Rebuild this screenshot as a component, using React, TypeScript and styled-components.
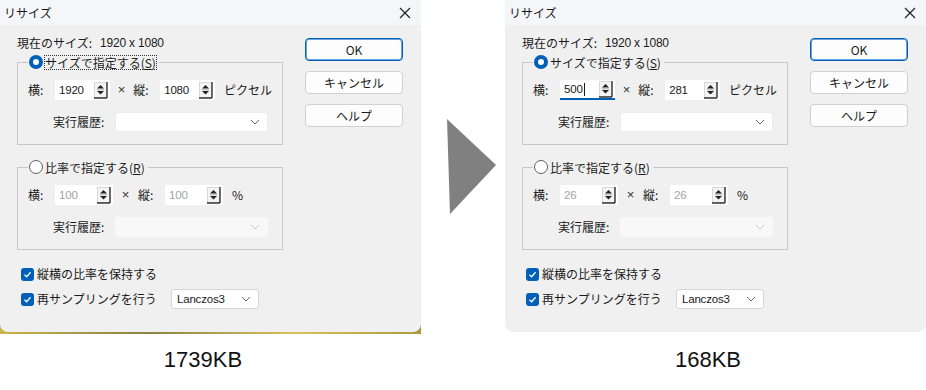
import React from "react";
import styled, {createGlobalStyle} from "styled-components";

const GlobalStyle = createGlobalStyle`
  html, body {
    margin: 0;
    padding: 0;
    background: #ffffff;
  }
  body {
    font-family: "Noto Sans CJK JP", "Noto Sans", sans-serif;
    color: #1a1a1a;
  }
`;

const Page = styled.div`
  display: flex;
  flex-direction: column;
  width: 926px;
  height: 390px;
  background: #ffffff;
  overflow: hidden;
`;

const TopRow = styled.div`
  display: flex;
  height: 334px;
`;

const Backdrop = styled.div<{$desktop?: boolean}>`
  width: 421px;
  height: 334px;
  background: ${(p) =>
    p.$desktop ? "linear-gradient(90deg, #c9b44a, #8a8442 35%, #d7c25a 70%, #a99a3c)" : "transparent"};
`;

const Dialog = styled.div`
  display: flex;
  flex-direction: column;
  width: 421px;
  height: 332px;
  background: #f0f0f0;
  border-radius: 0 0 8px 8px;
  font-size: 12px;
  line-height: 14px;
  overflow: hidden;
`;

const TitleBar = styled.div`
  display: flex;
  align-items: center;
  justify-content: space-between;
  height: 25px;
  padding: 0 10px 0 4px;
  background: #f4f6f9;
  font-size: 12px;
`;

const Body = styled.div`
  display: flex;
  gap: 22px;
  padding: 11px 0 0 17px;
`;

const Content = styled.div`
  display: flex;
  flex-direction: column;
  width: 266px;
`;

const CurrentSize = styled.div`
  display: flex;
  align-items: center;
  height: 14px;
  margin-bottom: 4px;
`;

const Num = styled.span<{$disabled?: boolean}>`
  font-family: "Liberation Sans", Arial, sans-serif;
  font-size: 11.5px;
  letter-spacing: -0.2px;
  color: ${(p) => (p.$disabled ? "#a3a3a3" : "#1a1a1a")};
`;

const SizeValue = styled(Num)`
  margin-left: 8px;
  font-size: 12px;
`;

const Group = styled.fieldset<{$gapTop?: number}>`
  margin: ${(p) => p.$gapTop ?? 0}px 0 0 0;
  padding: 10px 10px 12px 10px;
  border: 1px solid #c7c7c7;
  border-radius: 0;
  display: flex;
  flex-direction: column;
  gap: 12px;
  min-width: 0;
`;

const Legend = styled.legend`
  margin-left: 0;
  padding: 0 2px 0 1px;
  height: 16px;
`;

const LegendInner = styled.span`
  display: inline-flex;
  align-items: center;
  gap: 1px;
  height: 16px;
`;

const LegendText = styled.span<{$focus?: boolean}>`
  padding: 0 1px;
  outline: ${(p) => (p.$focus ? "1px dotted #333" : "none")};
  outline-offset: -1px;
  line-height: 15px;
`;

const Mnemonic = styled.span`
  text-decoration: underline;
  text-underline-offset: 1px;
`;

const RadioDot = styled.span<{$checked?: boolean}>`
  display: inline-block;
  box-sizing: border-box;
  width: 14px;
  height: 14px;
  border-radius: 50%;
  background: #ffffff;
  border: ${(p) => (p.$checked ? "4px solid #005fb8" : "1px solid #5f5f5f")};
`;

const FieldRow = styled.div`
  display: flex;
  align-items: center;
  height: 20px;
`;

const FieldLabel = styled.span<{$w: number}>`
  width: ${(p) => p.$w}px;
  flex-shrink: 0;
  white-space: nowrap;
`;

const SpinBox = styled.div<{$focus?: boolean}>`
  display: flex;
  align-items: center;
  justify-content: space-between;
  box-sizing: border-box;
  width: 58px;
  height: 20px;
  padding: 0 2px 0 4px;
  background: #ffffff;
  border-bottom: ${(p) => (p.$focus ? "2px solid #005fb8" : "0")};
`;

const Caret = styled.span`
  display: inline-block;
  width: 1px;
  height: 13px;
  margin-left: 1px;
  background: #1a1a1a;
  vertical-align: middle;
`;

const TimesSign = styled.span`
  width: 25px;
  text-align: center;
  font-family: "Liberation Sans", Arial, sans-serif;
  font-size: 13px;
  color: #333;
`;

const Unit = styled.span`
  margin-left: 9px;
  white-space: nowrap;
  font-family: "Noto Sans CJK JP", "Liberation Sans", sans-serif;
`;

const HistoryRow = styled(FieldRow)`
  padding-left: 25px;
`;

const Combo = styled.div<{$w: number; $disabled?: boolean; $bordered?: boolean}>`
  display: flex;
  align-items: center;
  justify-content: space-between;
  box-sizing: border-box;
  width: ${(p) => p.$w}px;
  height: 20px;
  padding: 0 7px 0 5px;
  background: ${(p) => (p.$disabled ? "#f8f8f8" : "#ffffff")};
  border: 1px solid ${(p) => (p.$bordered ? "#d5d5d5" : p.$disabled ? "#f8f8f8" : "#ececec")};
  border-radius: 3px;
`;

const CheckRow = styled.div<{$first?: boolean}>`
  display: flex;
  align-items: center;
  height: 20px;
  margin: ${(p) => (p.$first ? "14px" : "5px")} 0 0 4px;
`;

const CheckBox = styled.span`
  display: inline-flex;
  align-items: center;
  justify-content: center;
  width: 13px;
  height: 13px;
  border-radius: 3px;
  background: #005fb8;
  flex-shrink: 0;
`;

const CheckLabel = styled.span<{$w?: number}>`
  margin-left: 3px;
  white-space: nowrap;
  width: ${(p) => (p.$w ? `${p.$w}px` : "auto")};
`;

const ButtonColumn = styled.div`
  display: flex;
  flex-direction: column;
  gap: 10px;
  margin-top: 2px;
`;

const DialogButton = styled.div<{$default?: boolean}>`
  display: flex;
  align-items: center;
  justify-content: center;
  box-sizing: border-box;
  width: 98px;
  height: 23px;
  background: #fdfdfd;
  border: 1px solid ${(p) => (p.$default ? "#005fb8" : "#d0d0d0")};
  box-shadow: ${(p) => (p.$default ? "inset 0 0 0 1px #6fa3d8" : "none")};
  border-radius: 4px;
  font-size: 12px;
`;

const ArrowCell = styled.div`
  width: 84px;
  height: 334px;
`;

const CaptionRow = styled.div`
  display: flex;
`;

const Caption = styled.div`
  box-sizing: border-box;
  width: 421px;
  padding: 13px 15px 0 0;
  text-align: center;
  font-family: "Liberation Sans", Arial, sans-serif;
  font-size: 22px;
  line-height: 26px;
  color: #111;
`;

const CaptionGap = styled.div`
  width: 84px;
`;

const CloseIcon = () => (
  <svg width="12" height="12" viewBox="0 0 12 12">
    <path d="M1 1 L11 11 M11 1 L1 11" stroke="#222" strokeWidth="1.2" />
  </svg>
);

const Chevron = ({light}: {light?: boolean}) => (
  <svg width="10" height="6" viewBox="0 0 10 6">
    <path d="M1 1 L5 5 L9 1" fill="none" stroke={light ? "#c8c8c8" : "#6a6a6a"} strokeWidth="1" />
  </svg>
);

const SpinIcon = () => (
  <svg width="14" height="17" viewBox="0 0 14 17">
    <rect x="0.5" y="0.5" width="12" height="15" fill="#f4f4f4" stroke="#d8d8d8" />
    <path d="M3 6.5 L6.5 3 L10 6.5 Z" fill="#222" />
    <path d="M3 9 L6.5 12.5 L10 9 Z" fill="#222" />
    <path d="M3 7.8 H10" stroke="#888" strokeWidth="0.6" />
    <path d="M0 16 H13 M13 0 V16" stroke="#333" strokeWidth="1.4" />
  </svg>
);

const CheckMark = () => (
  <svg width="9" height="9" viewBox="0 0 9 9">
    <path d="M1.5 4.8 L3.6 6.8 L7.6 2.2" fill="none" stroke="#fff" strokeWidth="1.3" />
  </svg>
);

interface SpinFieldProps {
  value: string;
  disabled?: boolean;
  focus?: boolean;
}

const SpinField: React.FC<SpinFieldProps> = ({value, disabled, focus}) => (
  <SpinBox $focus={focus}>
    <Num $disabled={disabled}>
      {value}
      {focus && <Caret />}
    </Num>
    <SpinIcon />
  </SpinBox>
);

interface ResizeDialogProps {
  px: [string, string];
  pct: [string, string];
  inputFocus?: boolean;
}

const ResizeDialog: React.FC<ResizeDialogProps> = ({px, pct, inputFocus}) => (
  <Dialog>
    <TitleBar>
      <span>リサイズ</span>
      <CloseIcon />
    </TitleBar>
    <Body>
      <Content>
        <CurrentSize>
          現在のサイズ:
          <SizeValue>1920 x 1080</SizeValue>
        </CurrentSize>

        <Group>
          <Legend>
            <LegendInner>
              <RadioDot $checked />
              <LegendText $focus={!inputFocus}>
                サイズで指定する(<Mnemonic>S</Mnemonic>)
              </LegendText>
            </LegendInner>
          </Legend>
          <FieldRow>
            <FieldLabel $w={27}>横:</FieldLabel>
            <SpinField value={px[0]} focus={inputFocus} />
            <TimesSign>×</TimesSign>
            <FieldLabel $w={27}>縦:</FieldLabel>
            <SpinField value={px[1]} />
            <Unit>ピクセル</Unit>
          </FieldRow>
          <HistoryRow>
            <FieldLabel $w={62}>実行履歴:</FieldLabel>
            <Combo $w={153}>
              <span />
              <Chevron />
            </Combo>
          </HistoryRow>
        </Group>

        <Group $gapTop={14}>
          <Legend>
            <LegendInner>
              <RadioDot />
              <LegendText>
                比率で指定する(<Mnemonic>R</Mnemonic>)
              </LegendText>
            </LegendInner>
          </Legend>
          <FieldRow>
            <FieldLabel $w={27}>横:</FieldLabel>
            <SpinField value={pct[0]} disabled />
            <TimesSign>×</TimesSign>
            <FieldLabel $w={27}>縦:</FieldLabel>
            <SpinField value={pct[1]} disabled />
            <Unit>%</Unit>
          </FieldRow>
          <HistoryRow>
            <FieldLabel $w={62}>実行履歴:</FieldLabel>
            <Combo $w={153} $disabled>
              <span />
              <Chevron light />
            </Combo>
          </HistoryRow>
        </Group>

        <CheckRow $first>
          <CheckBox>
            <CheckMark />
          </CheckBox>
          <CheckLabel>縦横の比率を保持する</CheckLabel>
        </CheckRow>
        <CheckRow>
          <CheckBox>
            <CheckMark />
          </CheckBox>
          <CheckLabel $w={134}>再サンプリングを行う</CheckLabel>
          <Combo $w={88} $bordered>
            <Num>Lanczos3</Num>
            <Chevron />
          </Combo>
        </CheckRow>
      </Content>

      <ButtonColumn>
        <DialogButton $default>OK</DialogButton>
        <DialogButton>キャンセル</DialogButton>
        <DialogButton>ヘルプ</DialogButton>
      </ButtonColumn>
    </Body>
  </Dialog>
);

const App: React.FC = () => {
  return (
    <Page>
      <GlobalStyle />
      <TopRow>
        <Backdrop $desktop>
          <ResizeDialog px={["1920", "1080"]} pct={["100", "100"]} />
        </Backdrop>
        <ArrowCell>
          <svg width="84" height="334" viewBox="0 0 84 334">
            <polygon points="26,119 75,165 29,214" fill="#808080" />
          </svg>
        </ArrowCell>
        <Backdrop>
          <ResizeDialog px={["500", "281"]} pct={["26", "26"]} inputFocus />
        </Backdrop>
      </TopRow>
      <CaptionRow>
        <Caption>1739KB</Caption>
        <CaptionGap />
        <Caption>168KB</Caption>
      </CaptionRow>
    </Page>
  );
};

export default App;
